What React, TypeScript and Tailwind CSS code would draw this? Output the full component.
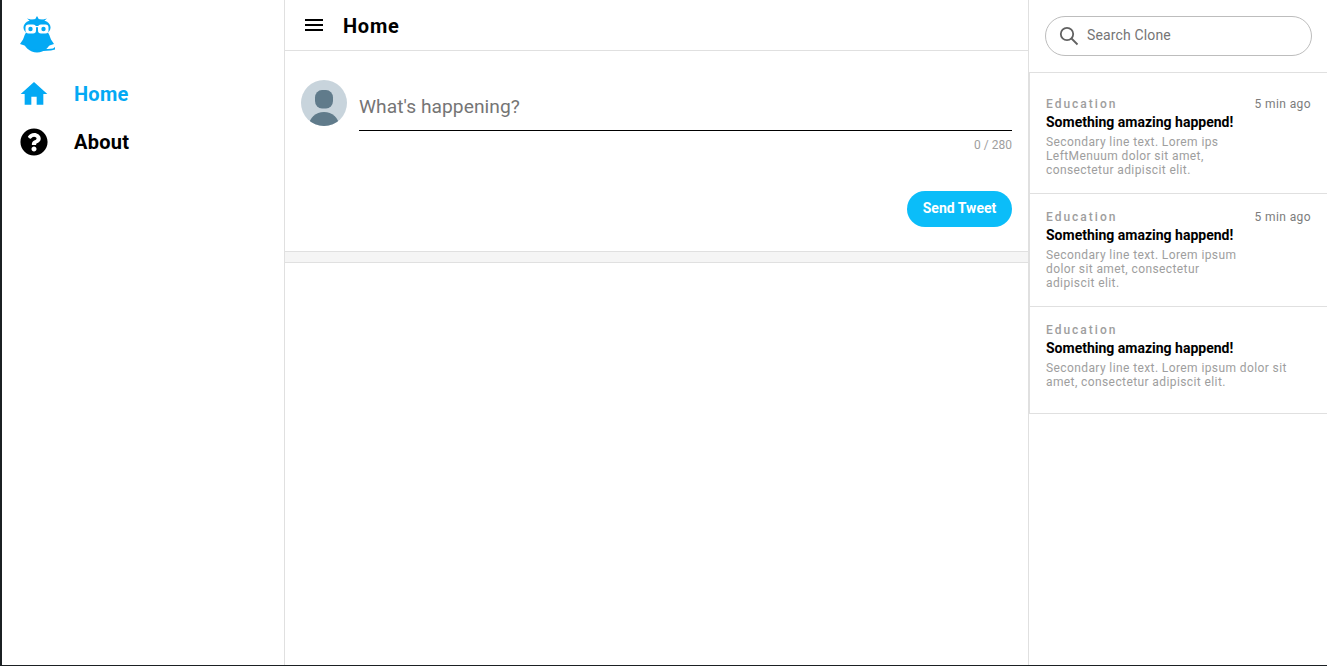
import React from "react";
import { FaQuestionCircle } from "react-icons/fa";

function Owl() {
  return (
    <svg width="40" height="40" viewBox="0 0 40 40" className="block">
      <g fill="#03a9f4">
        <path d="M12 7 L9 4.500 L15 6 L17 5.500 L19 2 L21 5.500 L23 6 L29 4.500 L26 7 Z" />
        <ellipse cx="19" cy="13.500" rx="13.500" ry="8.500" />
        <ellipse cx="19" cy="26" rx="13.500" ry="12.500" />
        <path d="M6 24 L2 30 L8 32 Z M32 24 L36 30 L30 32 Z" />
        <path d="M12 35 L30 35 L35 34.500 L37 33 L37 35.500 L33 36.500 L25 37 Z" />
      </g>
      <g fill="#fff">
        <rect x="7.500" y="10.500" width="10.500" height="9" rx="3" />
        <rect x="20" y="10.500" width="10.500" height="9" rx="3" />
        <rect x="17" y="12" width="4" height="1.200" />
      </g>
      <circle cx="12.500" cy="15" r="2.200" fill="#03a9f4" />
      <circle cx="25.500" cy="15" r="2.200" fill="#03a9f4" />
      <path d="M17.800 16 H20.200 L19 19 Z" fill="#03a9f4" />
    </svg>
  );
}

function NavItem({ active, icon, label }: { active?: boolean; icon: React.ReactNode; label: string }) {
  return (
    <div className={`flex h-12 items-center ${active ? "text-[#03a9f4]" : "text-black"}`}>
      <div className="w-[72px] pl-[16px]">{icon}</div>
      <span className="text-[20px] leading-6 font-bold tracking-[0.25px]">{label}</span>
    </div>
  );
}

function Trend({ text, time, last }: { text: string; time?: boolean; last?: boolean }) {
  return (
    <div className={`relative border-b border-[#e0e0e0] pl-[16px] pr-4 pt-[16px] ${last ? "h-[107px]" : "h-[113px]"}`}>
      <p className="text-[12px] leading-[14px] font-medium tracking-[2px] text-[#9e9e9e]">Education</p>
      {time && <span className="absolute right-4 top-[16px] text-[12px] leading-[14px] tracking-[0.4px] text-[#7c7c7c]">5 min ago</span>}
      <p className="mt-[1px] text-[14px] leading-[20px] font-bold text-black">Something amazing happend!</p>
      <p className={`mt-[3px] text-[12px] leading-[14px] tracking-[0.4px] text-[#9e9e9e] ${last ? "w-[250px]" : "w-[200px]"}`}>{text}</p>
    </div>
  );
}

export default function App() {
  return (
    <div className="relative flex h-[666px] w-[1327px] overflow-hidden border-b border-l-2 border-[#1b2023] bg-white font-['Roboto',sans-serif]">
      <aside className="w-[283px] shrink-0 border-r border-[#e0e0e0]">
        <div className="h-[70px] pl-[16px] pt-[14px]">
          <Owl />
        </div>
        <NavItem
          active
          label="Home"
          icon={
            <svg width="32" height="32" viewBox="0 0 24 24" fill="currentColor" className="block">
              <path d="M10 20v-6h4v6h5v-8h3L12 3 2 12h3v8z" />
            </svg>
          }
        />
        <NavItem
          label="About"
          icon={<FaQuestionCircle size={28} className="ml-[2px] block" />}
        />
      </aside>

      <main className="w-[744px] shrink-0 border-r border-[#e0e0e0]">
        <header className="flex h-[51px] items-center border-b border-[#e0e0e0] pl-[17px]">
          <svg width="24" height="24" viewBox="0 0 24 24" fill="#000" className="block">
            <path d="M3 18h18v-2H3v2zm0-5h18v-2H3v2zm0-7v2h18V6H3z" />
          </svg>
          <h1 className="ml-[17px] pt-[2px] text-[20px] leading-6 font-bold tracking-[0.75px] text-black">Home</h1>
        </header>
        <section className="h-[200px] px-4 pt-[29px]">
          <div className="flex gap-3">
            <svg width="46" height="46" viewBox="0 0 46 46" className="block shrink-0">
              <defs>
                <clipPath id="av">
                  <circle cx="23" cy="23" r="23" />
                </clipPath>
              </defs>
              <circle cx="23" cy="23" r="23" fill="#c8d4dc" />
              <g clipPath="url(#av)" fill="#607b8b">
                <rect x="14" y="10" width="18" height="18.500" rx="7" ry="7.500" />
                <ellipse cx="23" cy="46" rx="15" ry="14" />
              </g>
            </svg>
            <div className="min-w-0 flex-1">
              <div className="h-[51px] border-b border-black pt-[15px] text-[19.200px] leading-[24px] tracking-[0.05px] text-[#757575]">What's happening?</div>
              <p className="mt-[7px] text-right text-[12px] leading-[14px] text-[#9e9e9e]">0 / 280</p>
            </div>
          </div>
          <div className="mt-[39px] flex justify-end">
            <button className="h-9 w-[105px] rounded-full bg-[#0bbdf9] pb-[2px] text-[14px] font-bold text-white">Send Tweet</button>
          </div>
        </section>
        <div className="h-3 border-y border-[#e0e0e0] bg-[#f5f5f5]" />
      </main>

      <aside className="min-w-0 flex-1">
        <div className="h-[72px] pl-4 pr-[15px] pt-4">
          <div className="flex h-[40px] items-center rounded-full border border-[#bdbdbd] pb-[2px] pl-[12px]">
            <svg width="22" height="22" viewBox="0 0 22 22" fill="none" stroke="#616161" strokeWidth="1.800" className="mt-[2px] block">
              <circle cx="9" cy="9" r="6.200" />
              <path d="M13.500 13.500 L19.500 19.500" />
            </svg>
            <span className="ml-[7px] text-[14px] tracking-[0.15px] text-[#757575]">Search Clone</span>
          </div>
        </div>
        <div className="border-l border-t border-[#e0e0e0] pt-2">
          <Trend time text="Secondary line text. Lorem ips LeftMenuum dolor sit amet, consectetur adipiscit elit." />
          <Trend time text="Secondary line text. Lorem ipsum dolor sit amet, consectetur adipiscit elit." />
          <Trend last text="Secondary line text. Lorem ipsum dolor sit amet, consectetur adipiscit elit." />
        </div>
      </aside>
      <div className="absolute bottom-[-1px] left-[182px] h-px w-9 bg-[#4a4a4a]" />
    </div>
  );
}
